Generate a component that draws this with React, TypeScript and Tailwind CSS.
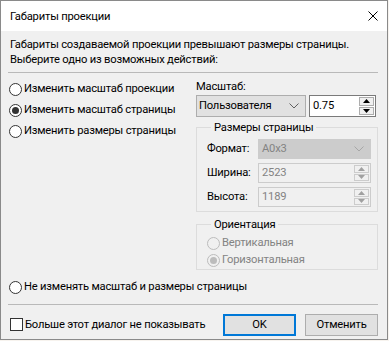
import React from "react";

function Radio({ checked = false, disabled = false }: { checked?: boolean; disabled?: boolean }) {
  return (
    <span
      className={`w-[13px] h-[13px] rounded-full border flex items-center justify-center shrink-0 ${
        disabled ? "border-[#bcbcbc] bg-[#f0f0f0]" : "border-[#333333] bg-white"
      }`}
    >
      {checked && (
        <span className={`w-[7px] h-[7px] rounded-full ${disabled ? "bg-[#bcbcbc]" : "bg-[#333333]"}`} />
      )}
    </span>
  );
}

function Chevron({ color }: { color: string }) {
  return (
    <svg width="10" height="6" viewBox="0 0 10 6" className="shrink-0">
      <path d="M0.5 0.5 L5 5 L9.5 0.5" stroke={color} strokeWidth="1" fill="none" />
    </svg>
  );
}

function Spin({ disabled = false }: { disabled?: boolean }) {
  const c = disabled ? "#a0a0a0" : "#000000";
  const btn = disabled
    ? "flex-1 border border-[#cccccc] bg-[#f0f0f0] flex items-center justify-center"
    : "flex-1 border border-[#adadad] bg-[#f0f0f0] flex items-center justify-center";
  return (
    <div className="flex flex-col w-[16px] h-full gap-[1px] py-[1px] pr-[1px]">
      <div className={btn}>
        <svg width="7" height="4" viewBox="0 0 7 4">
          <path d="M0 4 L3.5 0 L7 4 Z" fill={c} />
        </svg>
      </div>
      <div className={btn}>
        <svg width="7" height="4" viewBox="0 0 7 4">
          <path d="M0 0 L3.5 4 L7 0 Z" fill={c} />
        </svg>
      </div>
    </div>
  );
}

export default function App() {
  return (
    <div className="w-[389px] h-[341px] bg-[#f7f3ee] font-['Roboto','Noto_Sans',sans-serif] text-[11.2px] tracking-[-0.2px] text-black whitespace-nowrap">
      <div className="w-[388px] h-[340px] border border-[#8a8a8a] bg-[#f0f0f0] flex flex-col overflow-hidden">
        {/* title bar */}
        <div className="h-[30px] bg-white flex items-center justify-between pl-[9px] pr-[9px] shrink-0">
          <span className="leading-[15px]">Габариты проекции</span>
          <svg width="10" height="10" viewBox="0 0 10 10">
            <path d="M0.5 0.5 L9.5 9.5 M9.5 0.5 L0.5 9.5" stroke="#000" strokeWidth="1" />
          </svg>
        </div>

        {/* body */}
        <div className="flex flex-col pl-[6px] pr-[9px]">
          <p className="pt-[6px] pl-[3px] leading-[15px]">
            Габариты создаваемой проекции превышают размеры страницы.
            <br />
            Выберите одно из возможных действий:
          </p>
          <div className="mt-[5px] h-px bg-[#b9b9b9] ml-[1px]" />

          <div className="flex">
            {/* left column */}
            <div className="w-[189px] flex flex-col pt-[6px] pl-[2px]">
              <div className="h-[21px] flex items-center gap-[2px]">
                <Radio />
                <span>Изменить масштаб проекции</span>
              </div>
              <div className="h-[21px] flex items-center gap-[2px]">
                <Radio checked />
                <span>Изменить масштаб страницы</span>
              </div>
              <div className="h-[21px] flex items-center gap-[2px]">
                <Radio />
                <span>Изменить размеры страницы</span>
              </div>
            </div>

            {/* right column */}
            <div className="flex-1 flex flex-col">
              <div className="mt-[6px] leading-[15px]">Масштаб:</div>
              <div className="mt-[1px] flex gap-[3px] h-[22px]">
                <div className="w-[110px] h-full border border-[#adadad] bg-[#e1e1e1] flex items-center justify-between pl-[2px] pr-[6px]">
                  <span>Пользователя</span>
                  <Chevron color="#606060" />
                </div>
                <div className="w-[67px] h-full border border-[#7a7a7a] bg-white flex items-center justify-between">
                  <span className="pl-[3px]">0.75</span>
                  <Spin />
                </div>
              </div>

              <fieldset className="mt-[3px] border border-[#dcdcdc] pb-[4px] pl-[10px] pr-[6px]">
                <legend className="ml-[4px] px-[3px] leading-[15px]">Размеры страницы</legend>
                <div className="flex flex-col gap-[4px] mt-[4px]">
                  <div className="flex items-center h-[20px]">
                    <span className="w-[51px]">Формат:</span>
                    <div className="w-[113px] h-full border border-[#cccccc] bg-[#cccccc] flex items-center justify-between pl-[3px] pr-[6px] text-[#838383]">
                      <span>A0x3</span>
                      <Chevron color="#a6a6a6" />
                    </div>
                  </div>
                  <div className="flex items-center h-[20px]">
                    <span className="w-[51px]">Ширина:</span>
                    <div className="w-[113px] h-full border border-[#cccccc] bg-[#f0f0f0] flex items-center justify-between text-[#838383]">
                      <span className="pl-[3px]">2523</span>
                      <Spin disabled />
                    </div>
                  </div>
                  <div className="flex items-center h-[20px]">
                    <span className="w-[51px]">Высота:</span>
                    <div className="w-[113px] h-full border border-[#cccccc] bg-[#f0f0f0] flex items-center justify-between text-[#838383]">
                      <span className="pl-[3px]">1189</span>
                      <Spin disabled />
                    </div>
                  </div>
                </div>
              </fieldset>

              <fieldset className="mt-[5px] border border-[#dcdcdc] pl-[10px]">
                <legend className="ml-[4px] px-[3px] leading-[15px]">Ориентация</legend>
                <div className="flex flex-col mt-[3px] text-[#838383]">
                  <div className="h-[17px] flex items-center gap-[2px]">
                    <Radio disabled />
                    <span>Вертикальная</span>
                  </div>
                  <div className="h-[17px] flex items-center gap-[2px]">
                    <Radio disabled checked />
                    <span>Горизонтальная</span>
                  </div>
                </div>
              </fieldset>
            </div>
          </div>

          <div className="mt-[7px] pl-[2px] h-[21px] flex items-center gap-[2px]">
            <Radio />
            <span>Не изменять масштаб и размеры страницы</span>
          </div>

          <div className="mt-[6px] h-px bg-[#b9b9b9] ml-[1px]" />

          <div className="mt-[9px] flex items-center">
            <div className="flex items-center gap-[2px] pl-[3px] flex-1">
              <span className="w-[13px] h-[13px] border border-[#333333] bg-white shrink-0" />
              <span>Больше этот диалог не показывать</span>
            </div>
            <button className="w-[73px] h-[22px] border-2 border-[#0078d7] bg-[#e1e1e1] flex items-center justify-center">
              OK
            </button>
            <button className="ml-[9px] w-[73px] h-[22px] border border-[#adadad] bg-[#e1e1e1] flex items-center justify-center">
              Отменить
            </button>
          </div>
        </div>
      </div>
    </div>
  );
}
